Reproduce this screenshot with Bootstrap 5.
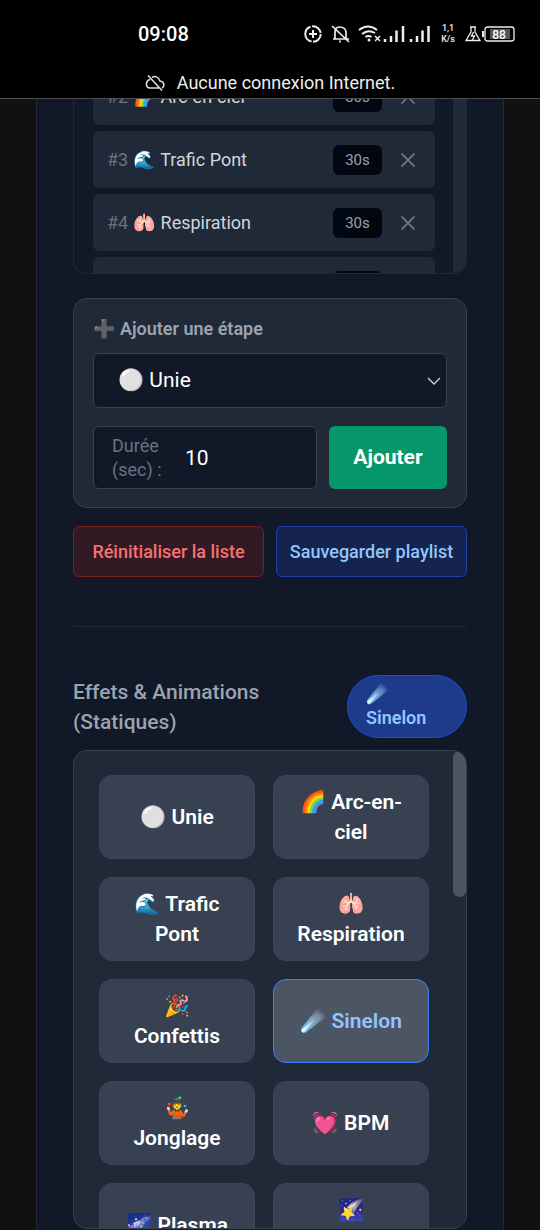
<!DOCTYPE html>
<html lang="fr">
<head>
<meta charset="utf-8">
<meta name="viewport" content="width=device-width, initial-scale=1">
<title>Effets &amp; Animations</title>
<link rel="stylesheet" href="https://cdn.jsdelivr.net/npm/bootstrap@5.3.0/dist/css/bootstrap.min.css">
<style>
  body { background: #111; color: #d1d5db; font: 400 18px/24px Roboto, "Noto Color Emoji", sans-serif; }
  button, select, input { font-family: inherit; }
  .phone-bar { background: #000; color: #eee; border-bottom: 1px solid #4b4d50; height: 99px; }
  .phone-status { padding-top: 23px; }
  .phone-clock { font-size: 20px; font-weight: 500; color: #fff; margin-left: 138px; }
  .phone-icons { padding-right: 25px; }
  .phone-rate { font-size: 9px; line-height: 11px; font-weight: 500; margin-left: 11px; }
  .offline { gap: 12px; padding-bottom: 3px; }
  .app-panel { background: #111827; border: 1px solid #1f2937; border-width: 0 1px; margin: 0 36px; padding: 0 36px; }
  .playlist { height: 175px; border: 1px solid #1f2937; border-top: 0; border-radius: 0 0 14px 14px; }
  .playlist-steps { padding: 0 18px 0 19px; gap: 6px; }
  .playlist-steps li { flex: 0 0 57px; background: #1f2937; border-radius: 6px; padding: 0 15px 0 14px; }
  .playlist-steps li:first-child { margin-top: -31px; }
  .step-rank { color: #6b7280; margin-right: 1px; }
  .step-time { background: #030712; color: #9ca3af; font-size: 15px; line-height: 30px; width: 49px; border-radius: 6px; }
  .step-drop { background: none; color: #6b7280; width: 24px; margin-left: 14px; }
  .track { width: 13px; background: #1f2937; flex: none; }
  .thumb { height: 146px; background: #4b5563; border-radius: 7px; }
  .add-card { background: #1f2937; border: 1px solid #374151; border-radius: 14px; margin-top: 24px; padding: 18px 19px; }
  .add-title { color: #9ca3af; font-size: 18px; line-height: 24px; font-weight: 600; margin-bottom: 12px; }
  .field-box { background-color: #111827; border: 1px solid #374151; border-radius: 6px; color: #fff; }
  .effect-select { height: 55px; font-size: 21px; padding: 0 30px 0 24px; background-size: 16px; background-position: right 4px center;
    background-image: url("data:image/svg+xml,%3csvg xmlns='http://www.w3.org/2000/svg' viewBox='0 0 16 16'%3e%3cpath fill='none' stroke='%23d1d5db' stroke-width='1.3' d='m2 5 6 6 6-6'/%3e%3c/svg%3e"); }
  .effect-select:focus { background-color: #111827; color: #fff; }
  .add-row { gap: 12px; margin-top: 18px; }
  .duration { height: 63px; padding: 0 18px; }
  .duration label { color: #6b7280; width: 56px; }
  .duration input { background: none; border: 0; color: #fff; font-size: 21px; width: 80px; margin-left: 17px; padding: 0; }
  .btn-add { background: #059669; color: #fff; font-size: 21px; font-weight: 700; width: 118px; border-radius: 6px; border: 0; }
  .list-actions { gap: 12px; margin-top: 18px; }
  .list-actions .btn { flex: 1 1 0; height: 51px; padding: 0; font-size: 18px; font-weight: 500; border-radius: 6px; white-space: nowrap; }
  .btn-reset { background: #321a24; border-color: #7f1d1d; color: #f87171; }
  .btn-save { background: #15234f; border-color: #1e40af; color: #93c5fd; }
  .separator { border-top: 1px solid #1f2937; opacity: 1; margin: 49px 0 48px; }
  .effects-title { color: #9ca3af; font-size: 21px; line-height: 30px; font-weight: 500; }
  .current-effect { width: 120px; background: #1e3a8a; border: 1px solid #1d4ed8; border-radius: 32px; color: #93c5fd; font-weight: 600; padding: 6px 18px 7px; }
  .effects-panel { background: #1f2937; border: 1px solid #374151; border-radius: 14px; margin: 12px 0 1px; min-height: 0; }
  .effects-grid { display: grid; grid-template-columns: 1fr 1fr; grid-auto-rows: 84px; gap: 18px; padding: 24px 24px 0 25px; }
  .effect { background: #374151; color: #fff; border: 1px solid #3c4656; border-radius: 13px; font-size: 21px; line-height: 30px; font-weight: 600; padding: 0 20px; }
  .effect.active { background: #4b5563; border-color: #3b82f6; color: #93c5fd; }
</style>
</head>
<body class="vh-100 d-flex flex-column overflow-hidden">
<header class="phone-bar flex-shrink-0 d-flex flex-column">
  <div class="phone-status d-flex align-items-center justify-content-between">
    <span class="phone-clock lh-1">09:08</span>
    <div class="phone-icons d-flex align-items-center">
      <svg width="126" height="20" viewBox="0 0 126 20" fill="none" stroke="#eee" stroke-width="2" aria-hidden="true">
        <circle cx="9" cy="10" r="7.7" stroke-dasharray="12 1.5 20 1.5"/><path d="M9 6v8M5 10h8"/>
        <path d="M31 15V8c0-3 2-5 5-5s6 2 6 5v7M29 15h16M36 16.500v2M28 2l17 16" stroke-width="1.700"/>
        <path d="M55 6q9-7 18 0M58 10q6-5 13-1M61.500 13q3-2 6 0" />
        <circle cx="65" cy="16" r="1.500" fill="#eee" stroke="none"/><path d="m71 12 5 5m0-5-5 5" stroke-width="1.500"/>
        <path d="M81 18v-3M87 18v-6M92.500 18V6.500M99 18V2M107 18v-3M113 18v-6M118.500 18V6.500M124.500 18V2" stroke-width="2.500"/>
      </svg>
      <div class="phone-rate text-center">1,1<br>K/s</div>
      <svg class="ms-2" width="52" height="18" viewBox="0 0 52 18" fill="none" stroke="#eee" stroke-width="1.300" aria-hidden="true">
        <path d="M7 2h6M8 2v5l-5 8.500h14L12 7V2M10.500 7l-2 4h3l-2 4"/>
        <path d="M20 6v6" stroke-width="2"/><rect x="22" y="2" width="29" height="14" rx="2.500"/><rect x="27" y="4" width="20" height="10" fill="#555" stroke="none"/>
        <text x="36" y="14" text-anchor="middle" font-family="Roboto, sans-serif" font-size="12" font-weight="500" fill="#fff" stroke="none">88</text>
      </svg>
    </div>
  </div>
  <div class="offline d-flex align-items-center justify-content-center mt-auto">
    <svg width="20" height="18" viewBox="0 0 20 18" fill="none" stroke="#ddd" stroke-width="1.600" aria-hidden="true"><path d="M7 3.500q5-3 8 3.500c5 .5 4.500 6 2 7M5 5.500C0 7 .5 14 5 14h9M3 1.500l14 15"/></svg>
    <span>Aucune connexion Internet.</span>
  </div>
</header>

<main class="app-panel flex-grow-1 d-flex flex-column overflow-hidden">
  <section class="playlist flex-shrink-0 d-flex overflow-hidden" aria-label="Playlist">
    <ul class="playlist-steps list-unstyled mb-0 flex-grow-1 d-flex flex-column">
      <li class="d-flex align-items-center"><span class="flex-grow-1"><span class="step-rank">#2</span> 🌈 Arc-en-ciel</span><span class="step-time text-center">30s</span><button class="step-drop btn p-0 border-0 lh-1" aria-label="Supprimer"><svg width="16" height="16" viewBox="0 0 16 16" stroke="currentColor" stroke-width="1.800"><path d="m1.500 1.500 13 13m0-13-13 13"/></svg></button></li>
      <li class="d-flex align-items-center"><span class="flex-grow-1"><span class="step-rank">#3</span> 🌊 Trafic Pont</span><span class="step-time text-center">30s</span><button class="step-drop btn p-0 border-0 lh-1" aria-label="Supprimer"><svg width="16" height="16" viewBox="0 0 16 16" stroke="currentColor" stroke-width="1.800"><path d="m1.500 1.500 13 13m0-13-13 13"/></svg></button></li>
      <li class="d-flex align-items-center"><span class="flex-grow-1"><span class="step-rank">#4</span> 🫁 Respiration</span><span class="step-time text-center">30s</span><button class="step-drop btn p-0 border-0 lh-1" aria-label="Supprimer"><svg width="16" height="16" viewBox="0 0 16 16" stroke="currentColor" stroke-width="1.800"><path d="m1.500 1.500 13 13m0-13-13 13"/></svg></button></li>
      <li class="d-flex align-items-center"><span class="flex-grow-1"></span><span class="step-time text-center">&nbsp;</span><span class="step-drop"></span></li>
    </ul>
    <div class="track"></div>
  </section>

  <form class="add-card flex-shrink-0" onsubmit="return false">
    <label class="add-title d-block" for="effet">➕ Ajouter une étape</label>
    <select id="effet" class="form-select field-box effect-select"><option>⚪ Unie</option><option>🌈 Arc-en-ciel</option><option>🌊 Trafic Pont</option></select>
    <div class="add-row d-flex">
      <div class="duration field-box flex-grow-1 d-flex align-items-center">
        <label for="duree">Durée (sec) :</label>
        <input id="duree" type="text" inputmode="numeric" value="10">
      </div>
      <button class="btn btn-add p-0">Ajouter</button>
    </div>
  </form>

  <div class="list-actions d-flex flex-shrink-0">
    <button class="btn btn-reset">Réinitialiser la liste</button>
    <button class="btn btn-save">Sauvegarder playlist</button>
  </div>
  <hr class="separator flex-shrink-0">

  <div class="d-flex align-items-center justify-content-between flex-shrink-0">
    <h2 class="effects-title mb-0">Effets &amp; Animations (Statiques)</h2>
    <span class="current-effect flex-shrink-0">☄️ Sinelon</span>
  </div>
  <section class="effects-panel flex-grow-1 d-flex overflow-hidden" aria-label="Effets">
    <div class="effects-grid flex-grow-1">
      <button class="effect btn">⚪ Unie</button>
      <button class="effect btn">🌈 Arc-en-ciel</button>
      <button class="effect btn">🌊 Trafic Pont</button>
      <button class="effect btn">🫁 Respiration</button>
      <button class="effect btn">🎉 Confettis</button>
      <button class="effect btn active">☄️ Sinelon</button>
      <button class="effect btn">🤹 Jonglage</button>
      <button class="effect btn">💓 BPM</button>
      <button class="effect btn">🌌 Plasma</button>
      <button class="effect btn">🌠 Météores</button>
    </div>
    <div class="track"><div class="thumb"></div></div>
  </section>
</main>
<script src="https://cdn.jsdelivr.net/npm/bootstrap@5.3.0/dist/js/bootstrap.bundle.min.js"></script>
</body>
</html>
